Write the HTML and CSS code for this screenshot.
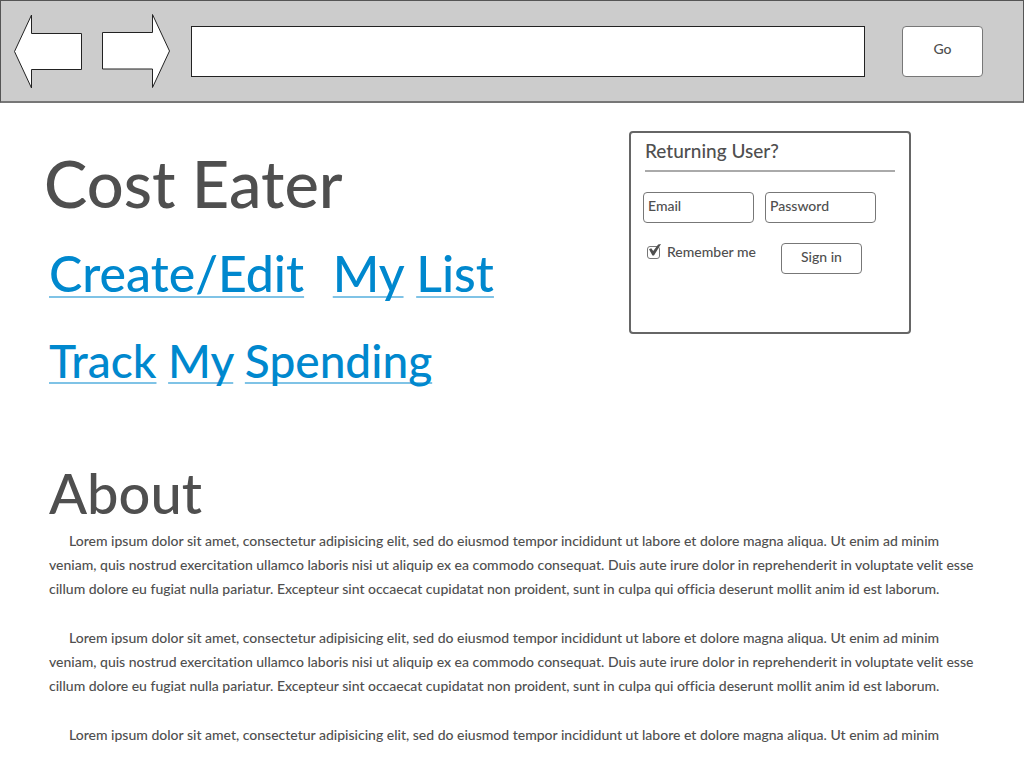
FILE: index.html
```html
<!DOCTYPE html>
<html lang="en">
<head>
<meta charset="utf-8">
<meta name="viewport" content="width=device-width, initial-scale=1">
<title>Cost Eater</title>
<link rel="stylesheet" href="styles.css">
</head>
<body>
<header>
  <form class="toolbar">
    <button class="arrow" type="button" aria-label="Back">
      <svg width="70" height="76" viewBox="0 0 70 76"><path d="M1.5 38.5L18.5 2V20.5H68.5V56.5H18.5V75Z"/></svg>
    </button>
    <button class="arrow" type="button" aria-label="Forward">
      <svg width="70" height="76" viewBox="0 0 70 76"><path d="M68.5 38L51.5 1.5V19.5H1.5V56H51.5V74.5Z"/></svg>
    </button>
    <input class="address" type="text" aria-label="Address">
    <button class="button go" type="button">Go</button>
  </form>
</header>
<main>
  <div class="top">
    <div class="intro">
      <h1>Cost Eater</h1>
      <nav class="links">
        <div class="link-row"><a class="spaced" href="#create">Create/Edit</a> <a href="#list">My</a> <a href="#list">List</a></div>
        <div class="link-row compact"><a href="#track">Track</a> <a href="#track">My</a> <a href="#track">Spending</a></div>
      </nav>
    </div>
    <form class="login">
      <h2>Returning User?</h2>
      <div class="fields">
        <input class="field" type="email" placeholder="Email" aria-label="Email">
        <input class="field" type="password" placeholder="Password" aria-label="Password">
      </div>
      <div class="actions">
        <label class="remember"><input class="check" type="checkbox" checked> Remember me</label>
        <button class="button sign-in" type="button">Sign in</button>
      </div>
    </form>
  </div>
  <section class="about">
    <h2>About</h2>
    <p>Lorem ipsum dolor sit amet, consectetur adipisicing elit, sed do eiusmod tempor incididunt ut labore et dolore magna aliqua. Ut enim ad minim<br>veniam, quis nostrud exercitation ullamco laboris nisi ut aliquip ex ea commodo consequat. Duis aute irure dolor in reprehenderit in voluptate velit esse<br>cillum dolore eu fugiat nulla pariatur. Excepteur sint occaecat cupidatat non proident, sunt in culpa qui officia deserunt mollit anim id est laborum.</p>
    <p>Lorem ipsum dolor sit amet, consectetur adipisicing elit, sed do eiusmod tempor incididunt ut labore et dolore magna aliqua. Ut enim ad minim<br>veniam, quis nostrud exercitation ullamco laboris nisi ut aliquip ex ea commodo consequat. Duis aute irure dolor in reprehenderit in voluptate velit esse<br>cillum dolore eu fugiat nulla pariatur. Excepteur sint occaecat cupidatat non proident, sunt in culpa qui officia deserunt mollit anim id est laborum.</p>
    <p>Lorem ipsum dolor sit amet, consectetur adipisicing elit, sed do eiusmod tempor incididunt ut labore et dolore magna aliqua. Ut enim ad minim</p>
  </section>
</main>
</body>
</html>
```

FILE: styles.css
```css
* {
  box-sizing: border-box;
}

body {
  margin: 0;
  background: #fff;
  color: #4f4f4f;
  font: 14px/24px Lato, "Open Sans", sans-serif;
  font-weight: 500;
  font-variant-ligatures: none;
}

h1, h2, p {
  margin: 0;
  font-weight: 500;
}

input, button {
  font: inherit;
  color: inherit;
}

.toolbar {
  display: flex;
  align-items: center;
  padding: 12px 40px 12px 12px;
  background: #ccc;
  border: 1px solid #555;
  border-bottom: 2px solid #777;
}

.arrow {
  display: flex;
  margin-right: 18px;
  padding: 0;
  border: 0;
  background: none;
}

.arrow path {
  fill: #fff;
  stroke: #222;
}

.address {
  flex: 1;
  min-width: 0;
  height: 51px;
  margin: 0 37px 0 2px;
  padding: 0 12px;
  border: 1px solid #222;
  background: #fff;
}

.button {
  width: 81px;
  padding: 0 0 4px;
  border: 1px solid #777;
  border-radius: 4px;
  background: #fff;
}

.go {
  height: 51px;
}

.top {
  display: flex;
  flex-wrap: wrap;
  align-items: flex-start;
  justify-content: space-between;
  padding: 0 113px 0 44px;
}

.intro {
  padding-top: 40px;
}

h1 {
  font-size: 65px;
  line-height: 80px;
}

.links {
  padding: 6px 0 0 5px;
  font-size: 50px;
  line-height: 88px;
}

.links a {
  color: #0088ce;
  text-decoration: underline 2px #7fc3e6;
  text-underline-offset: 4px;
  text-decoration-skip-ink: none;
}

.links .spaced {
  margin-right: 16px;
}

.links .compact {
  font-size: 46px;
}

.login {
  width: 282px;
  min-height: 203px;
  margin-top: 28px;
  padding: 2px 12px 12px;
  border: 2px solid #666;
  border-radius: 4px;
}

.login h2 {
  margin: 0 2px;
  padding: 0 0 4px;
  border-bottom: 2px solid #aaa;
  font-size: 19px;
  line-height: 31px;
}

.fields {
  display: flex;
  gap: 11px;
  margin-top: 20px;
}

.field {
  width: 111px;
  height: 31px;
  padding: 0 4px 4px;
  border: 1px solid #777;
  border-radius: 4px;
  background: #fff;
}

.field::placeholder {
  color: #4f4f4f;
  opacity: 1;
}

.actions {
  display: flex;
  align-items: flex-start;
  justify-content: space-between;
  margin-top: 20px;
  padding: 0 35px 0 4px;
}

.remember {
  display: flex;
  align-items: center;
  gap: 7px;
  line-height: 18px;
}

.check {
  appearance: none;
  width: 13px;
  height: 13px;
  margin: 0;
  border: 1px solid #777;
  border-radius: 3px;
}

.check:checked::before {
  content: "";
  display: block;
  width: 13px;
  height: 12px;
  margin-top: -3px;
  background: #4f4f4f;
  clip-path: polygon(8% 48%, 25% 40%, 40% 62%, 78% 8%, 100% 4%, 46% 100%, 34% 100%);
}

.sign-in {
  height: 31px;
}

.about {
  padding: 52px 40px 0 49px;
}

.about h2 {
  font-size: 56px;
  line-height: 72px;
}

.about p {
  margin-bottom: 25px;
  text-indent: 20px;
}

.about p:last-child {
  margin-bottom: 0;
}
```
